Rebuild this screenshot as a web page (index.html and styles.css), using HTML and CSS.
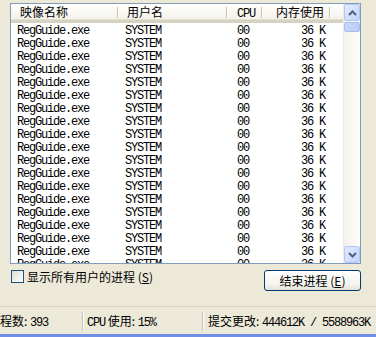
FILE: index.html
```html
<!DOCTYPE html>
<html>
<head>
<meta charset="utf-8">
<link rel="stylesheet" href="styles.css">
</head>
<body>
<div class="window">
  <div class="main">
    <div class="listbox">
      <div class="listview">
        <div class="header">
          <div class="hcell c1">映像名称</div>
          <div class="hcell c2">用户名</div>
          <div class="hcell c3"><span class="lat">CPU</span></div>
          <div class="hcell c4">内存使用</div>
          <div class="hcell c5"></div>
        </div>
        <div class="rows">
          <div class="row"><span class="cell c1">RegGuide.exe</span><span class="cell c2">SYSTEM</span><span class="cell c3">00</span><span class="cell c4">36 K</span></div>
          <div class="row"><span class="cell c1">RegGuide.exe</span><span class="cell c2">SYSTEM</span><span class="cell c3">00</span><span class="cell c4">36 K</span></div>
          <div class="row"><span class="cell c1">RegGuide.exe</span><span class="cell c2">SYSTEM</span><span class="cell c3">00</span><span class="cell c4">36 K</span></div>
          <div class="row"><span class="cell c1">RegGuide.exe</span><span class="cell c2">SYSTEM</span><span class="cell c3">00</span><span class="cell c4">36 K</span></div>
          <div class="row"><span class="cell c1">RegGuide.exe</span><span class="cell c2">SYSTEM</span><span class="cell c3">00</span><span class="cell c4">36 K</span></div>
          <div class="row"><span class="cell c1">RegGuide.exe</span><span class="cell c2">SYSTEM</span><span class="cell c3">00</span><span class="cell c4">36 K</span></div>
          <div class="row"><span class="cell c1">RegGuide.exe</span><span class="cell c2">SYSTEM</span><span class="cell c3">00</span><span class="cell c4">36 K</span></div>
          <div class="row"><span class="cell c1">RegGuide.exe</span><span class="cell c2">SYSTEM</span><span class="cell c3">00</span><span class="cell c4">36 K</span></div>
          <div class="row"><span class="cell c1">RegGuide.exe</span><span class="cell c2">SYSTEM</span><span class="cell c3">00</span><span class="cell c4">36 K</span></div>
          <div class="row"><span class="cell c1">RegGuide.exe</span><span class="cell c2">SYSTEM</span><span class="cell c3">00</span><span class="cell c4">36 K</span></div>
          <div class="row"><span class="cell c1">RegGuide.exe</span><span class="cell c2">SYSTEM</span><span class="cell c3">00</span><span class="cell c4">36 K</span></div>
          <div class="row"><span class="cell c1">RegGuide.exe</span><span class="cell c2">SYSTEM</span><span class="cell c3">00</span><span class="cell c4">36 K</span></div>
          <div class="row"><span class="cell c1">RegGuide.exe</span><span class="cell c2">SYSTEM</span><span class="cell c3">00</span><span class="cell c4">36 K</span></div>
          <div class="row"><span class="cell c1">RegGuide.exe</span><span class="cell c2">SYSTEM</span><span class="cell c3">00</span><span class="cell c4">36 K</span></div>
          <div class="row"><span class="cell c1">RegGuide.exe</span><span class="cell c2">SYSTEM</span><span class="cell c3">00</span><span class="cell c4">36 K</span></div>
          <div class="row"><span class="cell c1">RegGuide.exe</span><span class="cell c2">SYSTEM</span><span class="cell c3">00</span><span class="cell c4">36 K</span></div>
          <div class="row"><span class="cell c1">RegGuide.exe</span><span class="cell c2">SYSTEM</span><span class="cell c3">00</span><span class="cell c4">36 K</span></div>
          <div class="row"><span class="cell c1">RegGuide.exe</span><span class="cell c2">SYSTEM</span><span class="cell c3">00</span><span class="cell c4">36 K</span></div>
          <div class="row part"><span class="cell c1">RegGuide.exe</span><span class="cell c2">SYSTEM</span><span class="cell c3">00</span><span class="cell c4">36 K</span></div>
        </div>
      </div>
      <div class="scrollbar">
        <div class="sbtn">
          <svg width="9" height="6" viewBox="0 0 9 6"><path d="M1 5 L4.5 1.5 L8 5" fill="none" stroke="#4d6185" stroke-width="2"/></svg>
        </div>
        <div class="thumb"></div>
        <div class="track"></div>
        <div class="sbtn">
          <svg width="9" height="6" viewBox="0 0 9 6"><path d="M1 1 L4.5 4.5 L8 1" fill="none" stroke="#4d6185" stroke-width="2"/></svg>
        </div>
      </div>
    </div>
    <div class="controls">
      <label class="check"><span class="box"></span><span class="cjk">显示所有用户的进程 (<u>S</u>)</span></label>
      <button class="btn">结束进程 (<u>E</u>)</button>
    </div>
  </div>
  <div class="statusbar">
    <div class="panel p1">程数: <span class="lat">393</span></div>
    <div class="panel p2"><span class="lat">CPU</span> 使用: <span class="lat">15%</span></div>
    <div class="panel p3">提交更改: <span class="lat">444612K / 5588963K</span></div>
  </div>
  <div class="bluebar"></div>
</div>
</body>
</html>
```
FILE: styles.css
```css
* { box-sizing: border-box; }
html, body { margin: 0; padding: 0; }
body {
  width: 376px;
  height: 337px;
  overflow: hidden;
  background: #ece9d8;
  font-family: "Noto Sans CJK SC", sans-serif;
  font-size: 12px;
  color: #000;
}
.window {
  width: 376px;
  height: 337px;
  display: flex;
  flex-direction: column;
}
.main {
  padding: 3px 15px 0 10px;
  height: 306px;
}
.listbox {
  width: 351px;
  height: 261px;
  border: 1px solid #7f9db9;
  background: #fff;
  display: flex;
  overflow: hidden;
}
.listview {
  width: 332px;
  height: 259px;
  overflow: hidden;
  display: flex;
  flex-direction: column;
}
.header {
  display: flex;
  flex: none;
  height: 19px;
  background: linear-gradient(#ffffff, #f3f1e7);
  border-bottom: 3px solid #d6d2c2;
  box-shadow: inset 0 -1px 0 #e2decd;
}
.hcell {
  position: relative;
  height: 16px;
  line-height: 16px;
  white-space: nowrap;
  font-size: 12px;
}
.hcell::after {
  content: "";
  position: absolute;
  right: 0;
  top: 3px;
  height: 11px;
  width: 1px;
  background: #c7c5b2;
  box-shadow: 1px 0 0 #fff;
}
.hcell.c5::after { display: none; }
.hcell.c1 { width: 107px; padding-left: 9px; }
.hcell.c2 { width: 109px; padding-left: 9px; }
.hcell.c3 { width: 35px; padding-left: 10px; }
.hcell.c4 { width: 68px; padding-left: 14px; }
.hcell.c5 { flex: 1; }
.lat {
  font-family: "Liberation Mono", monospace;
  font-size: 12px;
  letter-spacing: -1.2px;
}
.rows {
  flex: 1;
  min-height: 0;
  overflow: hidden;
  padding-top: 2px;
}
.row {
  display: flex;
  height: 13px;
  line-height: 13px;
  font-family: "Liberation Mono", monospace;
  font-size: 12px;
  letter-spacing: -1.2px;
  white-space: nowrap;
}
.row.part { height: 6px; overflow: hidden; line-height: 13px; }
.cell.c1 { width: 107px; padding-left: 6px; }
.cell.c2 { width: 109px; padding-left: 7px; }
.cell.c3 { width: 35px; padding-left: 10px; }
.cell.c4 { width: 68px; text-align: right; padding-right: 5px; }
.scrollbar {
  width: 17px;
  display: flex;
  flex-direction: column;
  background: linear-gradient(90deg, #f3f1ec, #fefefb);
  border-left: 1px solid #eeede5;
}
.sbtn {
  height: 17px;
  border: 1px solid #b4c6f4;
  border-radius: 2px;
  background: linear-gradient(135deg, #e3ebfe, #c1d3fb);
  display: flex;
  align-items: center;
  justify-content: center;
}
.thumb {
  height: 10px;
  margin-top: 1px;
  border: 1px solid #a9bdeb;
  border-radius: 2px;
  background: linear-gradient(90deg, #c8d7fd, #b8ccf9);
}
.track { flex: 1; }
.controls {
  display: flex;
  justify-content: space-between;
  align-items: flex-start;
  margin-top: 6px;
  width: 351px;
}
.check {
  display: flex;
  align-items: center;
  gap: 3px;
  padding-left: 1px;
  height: 13px;
  line-height: 13px;
}
.box {
  width: 13px;
  height: 13px;
  border: 1px solid #1c5180;
  background: linear-gradient(135deg, #dcdbd5, #f8f8f6 80%);
}
.cjk { white-space: nowrap; font-size: 12px; }
.btn {
  width: 97px;
  height: 21px;
  border: 1px solid #003c74;
  border-radius: 3px;
  background: linear-gradient(#ffffff, #f4f4f0 70%, #e3e1d6);
  font-family: "Noto Sans CJK SC", sans-serif;
  font-size: 12px;
  padding: 0;
  color: #000;
}
.statusbar {
  height: 28px;
  display: flex;
  align-items: center;
  border-top: 1px solid #d8d4c4;
  white-space: nowrap;
  overflow: hidden;
}
.panel {
  height: 18px;
  line-height: 18px;
  overflow: hidden;
}
.p1 { width: 83px; border-right: 1px solid #c5c2b2; box-shadow: 1px 0 0 #fff; }
.p2 { width: 120px; padding-left: 4px; border-right: 1px solid #c5c2b2; box-shadow: 1px 0 0 #fff; }
.p3 { flex: 1; padding-left: 5px; }
.bluebar {
  height: 3px;
  background: #6f8fe6;
}
```
